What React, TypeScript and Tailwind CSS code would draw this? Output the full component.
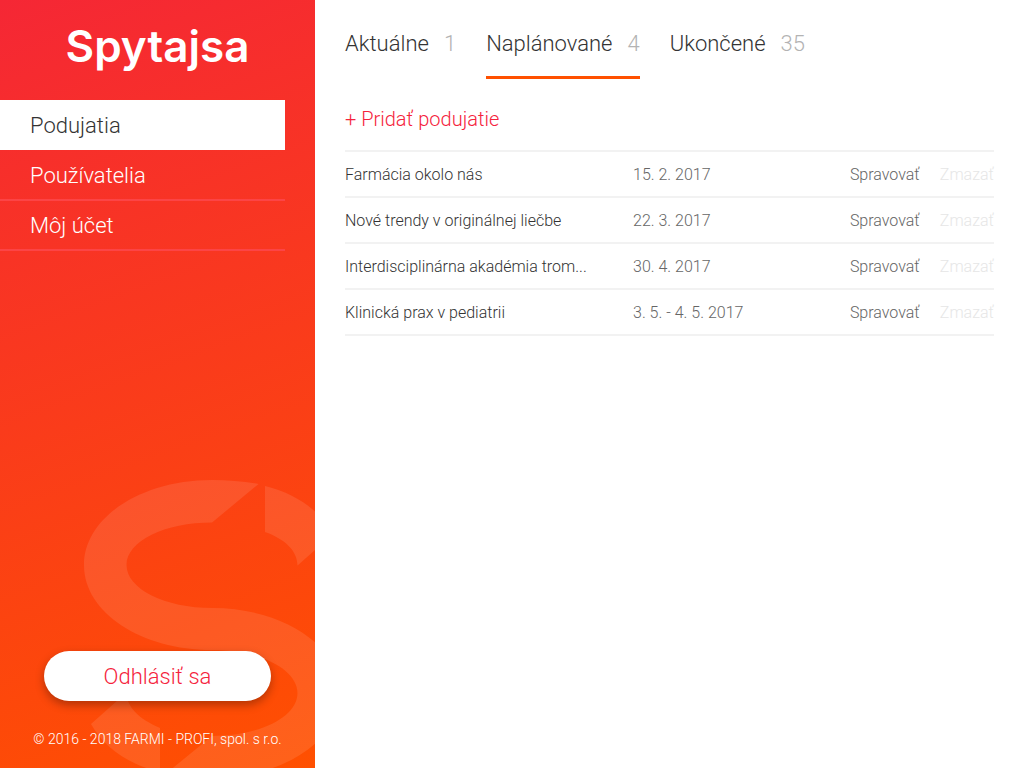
import clsx from "clsx";

const navLinks = [
  { href: "#events", label: "Podujatia" },
  { href: "#users", label: "Používatelia" },
  { href: "#account", label: "Môj účet" },
];

const tabs = [
  { label: "Aktuálne", count: 1 },
  { label: "Naplánované", count: 4 },
  { label: "Ukončené", count: 35 },
];

const events = [
  { name: "Farmácia okolo nás", date: "15. 2. 2017" },
  { name: "Nové trendy v originálnej liečbe", date: "22. 3. 2017" },
  { name: "Interdisciplinárna akadémia trom...", date: "30. 4. 2017" },
  { name: "Klinická prax v pediatrii", date: "3. 5. - 4. 5. 2017" },
];

function Watermark() {
  return (
    <svg
      viewBox="84 480 231 288"
      className="absolute right-0 bottom-0 h-[288px] w-[231px] fill-white/10"
      aria-hidden
    >
      <path d="M258.5 484Q236 480 212 480C142 480 84 517 84 565S142 650 212 650C260 650 297.5 669 297.5 693S260 736 212 736L165.500 774Q188 778 212 778C282 778 340 741 340 693S282 608 212 608C165 608 126.500 589 126.500 565S165 522.500 212 522.500Z" />
      <path d="M265 486V532C285 539 297.500 551 297.500 565.500L333 534C320 511 297 494 265 486Z" />
      <path d="M160 772V728C139 719 126.500 707 126.500 692.500L91 724C104 747 127 764 160 772Z" />
    </svg>
  );
}

function Sidebar() {
  const active = "#events";

  return (
    <aside className="relative flex w-[315px] shrink-0 flex-col overflow-hidden bg-[linear-gradient(160deg,#f52735,#ff5000)]">
      <Watermark />
      <a
        href="#home"
        className="flex h-[100px] items-center justify-center pb-2 font-[Inter] text-[44px] font-semibold text-white"
      >
        Spytajsa
      </a>
      <nav className="mr-[30px] flex flex-col text-[22px] font-light">
        {navLinks.map(({ href, label }) => (
          <a
            key={href}
            href={href}
            className={clsx(
              "flex h-[50px] items-center px-[30px]",
              href === active
                ? "mb-px bg-white text-[#333]"
                : "border-b-2 border-[#fc4446] text-white",
            )}
          >
            {label}
          </a>
        ))}
      </nav>
      <div className="relative mt-auto flex flex-col items-center gap-[28px] pb-[19px]">
        <button
          type="button"
          className="h-[50px] rounded-full bg-white px-[60px] text-[22px] font-light text-[#f5233c] shadow-[0_4px_10px_rgba(0,0,0,0.3)]"
        >
          Odhlásiť sa
        </button>
        <p className="text-sm font-light text-white">
          © 2016 - 2018 FARMI - PROFI, spol. s r.o.
        </p>
      </div>
    </aside>
  );
}

function EventTabs() {
  return (
    <div role="tablist" className="flex gap-[30px] text-[22px]">
      {tabs.map(({ label, count }) => {
        const selected = label === "Naplánované";
        return (
          <button
            key={label}
            type="button"
            role="tab"
            aria-selected={selected}
            className={clsx(
              "flex h-[79px] gap-[15px] border-b-3 pt-[27px] font-light",
              selected ? "border-[#ff5000]" : "border-transparent",
            )}
          >
            <span>{label}</span>
            <span className="text-[#b3b3b3]">{count}</span>
          </button>
        );
      })}
    </div>
  );
}

function EventTable() {
  return (
    <table className="w-full border-t-2 border-[#f2f2f2] text-left">
      <tbody>
        {events.map(({ name, date }) => (
          <tr key={name} className="h-[46px] border-b-2 border-[#f2f2f2]">
            <td className="w-[288px] p-0 pt-0.5">{name}</td>
            <td className="p-0 pt-0.5 text-[#666]">{date}</td>
            <td className="p-0 pt-0.5">
              <div className="flex justify-end gap-5">
                <button type="button" className="text-[#666]">
                  Spravovať
                </button>
                <button type="button" className="text-[#e6e6e6]">
                  Zmazať
                </button>
              </div>
            </td>
          </tr>
        ))}
      </tbody>
    </table>
  );
}

export default function App() {
  return (
    <div className="flex min-h-screen bg-white font-[Roboto,sans-serif] text-[#333]">
      <Sidebar />
      <main className="min-w-0 flex-1 px-[30px] font-light">
        <EventTabs />
        <button type="button" className="mt-[26px] mb-[17px] block text-xl text-[#f5233c]">
          + Pridať podujatie
        </button>
        <EventTable />
      </main>
    </div>
  );
}
